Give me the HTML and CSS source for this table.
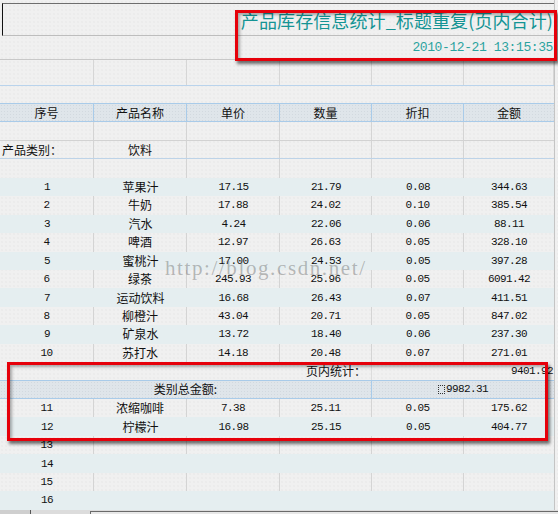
FILE: index.html
```html
<!DOCTYPE html>
<html>
<head>
<meta charset="utf-8">
<link rel="stylesheet" href="styles.css">
</head>
<body>
<div class="sheet">
  <div class="row title"><span class="title-text">产品库存信息统计_标题重复(页内合计)</span></div>
  <div class="row date"><span class="date-text">2010-12-21 13:15:35</span></div>
  <div class="row grid blank3"><div class="c"></div><div class="c"></div><div class="c"></div><div class="c"></div><div class="c"></div><div class="c"></div></div>
  <div class="row gap"></div>
  <div class="row grid head"><div class="c">序号</div><div class="c">产品名称</div><div class="c">单价</div><div class="c">数量</div><div class="c">折扣</div><div class="c">金额</div></div>
  <div class="row grid lined after-head"><div class="c"></div><div class="c"></div><div class="c"></div><div class="c"></div><div class="c"></div><div class="c"></div></div>
  <div class="row grid lined cat"><div class="c left">产品类别：</div><div class="c">饮料</div><div class="c"></div><div class="c"></div><div class="c"></div><div class="c"></div></div>
  <div class="row grid lined"><div class="c"></div><div class="c"></div><div class="c"></div><div class="c"></div><div class="c"></div><div class="c"></div></div>

  <div class="row grid tint"><div class="c n">1</div><div class="c">苹果汁</div><div class="c n">17.15</div><div class="c n">21.79</div><div class="c n">0.08</div><div class="c n">344.63</div></div>
  <div class="row grid lined"><div class="c n">2</div><div class="c">牛奶</div><div class="c n">17.88</div><div class="c n">24.02</div><div class="c n">0.10</div><div class="c n">385.54</div></div>
  <div class="row grid tint"><div class="c n">3</div><div class="c">汽水</div><div class="c n">4.24</div><div class="c n">22.06</div><div class="c n">0.06</div><div class="c n">88.11</div></div>
  <div class="row grid lined"><div class="c n">4</div><div class="c">啤酒</div><div class="c n">12.97</div><div class="c n">26.63</div><div class="c n">0.05</div><div class="c n">328.10</div></div>
  <div class="row grid tint"><div class="c n">5</div><div class="c">蜜桃汁</div><div class="c n">17.00</div><div class="c n">24.53</div><div class="c n">0.05</div><div class="c n">397.28</div></div>
  <div class="row grid lined"><div class="c n">6</div><div class="c">绿茶</div><div class="c n">245.93</div><div class="c n">25.96</div><div class="c n">0.05</div><div class="c n">6091.42</div></div>
  <div class="row grid tint"><div class="c n">7</div><div class="c">运动饮料</div><div class="c n">16.68</div><div class="c n">26.43</div><div class="c n">0.07</div><div class="c n">411.51</div></div>
  <div class="row grid lined"><div class="c n">8</div><div class="c">柳橙汁</div><div class="c n">43.04</div><div class="c n">20.71</div><div class="c n">0.05</div><div class="c n">847.02</div></div>
  <div class="row grid tint"><div class="c n">9</div><div class="c">矿泉水</div><div class="c n">13.72</div><div class="c n">18.40</div><div class="c n">0.06</div><div class="c n">237.30</div></div>
  <div class="row grid lined"><div class="c n">10</div><div class="c">苏打水</div><div class="c n">14.18</div><div class="c n">20.48</div><div class="c n">0.07</div><div class="c n">271.01</div></div>

  <div class="row grid pagesum"><div class="c"></div><div class="c"></div><div class="c"></div><div class="c right">页内统计：</div><div class="c"></div><div class="c right n">9401.92</div></div>
  <div class="row grid catsum"><div class="c span4">类别总金额:</div><div class="c span2 n"><span class="tofu"></span>9982.31</div></div>

  <div class="row grid lined"><div class="c n">11</div><div class="c">浓缩咖啡</div><div class="c n">7.38</div><div class="c n">25.11</div><div class="c n">0.05</div><div class="c n">175.62</div></div>
  <div class="row grid tint"><div class="c n">12</div><div class="c">柠檬汁</div><div class="c n">16.98</div><div class="c n">25.15</div><div class="c n">0.05</div><div class="c n">404.77</div></div>
  <div class="row grid lined"><div class="c n">13</div><div class="c"></div><div class="c"></div><div class="c"></div><div class="c"></div><div class="c"></div></div>
  <div class="row grid tint"><div class="c n">14</div><div class="c"></div><div class="c"></div><div class="c"></div><div class="c"></div><div class="c"></div></div>
  <div class="row grid lined"><div class="c n">15</div><div class="c"></div><div class="c"></div><div class="c"></div><div class="c"></div><div class="c"></div></div>
  <div class="row grid tint"><div class="c n">16</div><div class="c"></div><div class="c"></div><div class="c"></div><div class="c"></div><div class="c"></div></div>

  <div class="tabs"><div class="tab-a"></div><div class="tab-b"></div></div>
</div>

<div class="watermark">http://blog.csdn.net/</div>
<div class="callout callout-top"></div>
<div class="callout callout-mid"></div>
</body>
</html>
```

FILE: styles.css
```css
html, body {
  margin: 0;
  padding: 0;
}
body {
  width: 558px;
  height: 514px;
  overflow: hidden;
  position: relative;
  background-color: #f0f0f0;
  background-image: radial-gradient(#e5e5e5 0.6px, transparent 0.8px);
  background-size: 4px 4px;
  font-family: "Noto Sans CJK SC", sans-serif;
  font-size: 12px;
  color: #111;
}
.sheet {
  width: 554px;
  padding-top: 3px;
  border-right: 1px solid #c4c4c4;
}
.row {
  box-sizing: border-box;
}
.title {
  height: 33px;
  margin-left: 2px;
  border-top: 1px solid #6e6e6e;
  border-left: 1px solid #111;
  border-bottom: 1px solid #bdbdbd;
  display: flex;
  align-items: center;
  justify-content: flex-end;
  padding-right: 1px;
}
.title-text {
  font-family: "Noto Sans CJK SC", sans-serif;
  font-size: 18px;
  font-weight: 400;
  color: #149494;
  line-height: 20px;
  letter-spacing: 0.1px;
}
.date {
  height: 24px;
  border-bottom: 1px solid #c8c8c8;
  display: flex;
  align-items: center;
  justify-content: flex-end;
  padding-right: 1px;
}
.date-text {
  font-family: "Liberation Mono", monospace;
  font-size: 13px;
  letter-spacing: -0.4px;
  color: #2ba39f;
}
.grid {
  display: grid;
  grid-template-columns: 94px 93px 93px 92px 92px 90px;
}
.c {
  box-sizing: border-box;
  display: flex;
  align-items: center;
  justify-content: center;
  white-space: nowrap;
  overflow: hidden;
  line-height: 16px;
}
.n {
  font-family: "Liberation Mono", monospace;
  font-size: 11px;
  letter-spacing: -0.6px;
}
.left {
  justify-content: flex-start;
  padding-left: 2px;
}
.right {
  justify-content: flex-end;
  padding-right: 5px;
}
.blank3 {
  height: 26px;
  border-bottom: 1px solid #b9d3ec;
}
.blank3 .c {
  border-right: 1px solid #d6d6d6;
}
.gap {
  height: 18px;
  border-bottom: 1px solid #a9cbe9;
}
.head, .lined, .tint, .pagesum, .catsum {
  height: 18.45px;
}
.head {
  background-color: #dfe5ea;
  background-image: radial-gradient(#d2d9df 0.7px, transparent 0.9px);
  background-size: 3px 3px;
  border-bottom: 1px solid #a9cbe9;
}
.head .c {
  border-right: 1px solid #a9cbe9;
}
.lined .c {
  border-right: 1px solid #d4d4d4;
}
.lined .c:last-child, .tint .c:last-child, .head .c:last-child {
  border-right: none;
}
.after-head {
  border-bottom: 1px solid #d2d2d2;
}
.cat {
  border-bottom: 1px solid #bdd3e8;
}
.tint {
  background-color: #e5eef0;
}
.pagesum {
  border-bottom: 1px solid #a9cbe9;
}
.pagesum .c:nth-child(4) {
  border-right: 1px solid #dcdcdc;
}
.pagesum .c:last-child {
  padding-right: 1px;
}
.catsum {
  background-color: #dfe5ea;
  background-image: radial-gradient(#d2d9df 0.7px, transparent 0.9px);
  background-size: 3px 3px;
  border-bottom: 1px solid #a9cbe9;
}
.span4 {
  grid-column: span 4;
  border-right: 1px solid #a9cbe9;
}
.span2 {
  grid-column: span 2;
}
.tofu {
  display: inline-block;
  width: 7px;
  height: 9px;
  border: 1px dotted #333;
  box-sizing: border-box;
  margin-right: 1px;
}
.tabs {
  height: 5px;
  position: relative;
  background: #dcdcdc;
  width: 558px;
}
.tab-a {
  position: absolute;
  left: 0;
  top: 0;
  width: 30px;
  height: 5px;
  background: #cfcfcf;
  border-right: 1px solid #555;
}
.tab-b {
  position: absolute;
  left: 90px;
  top: 1px;
  width: 470px;
  height: 4px;
  border-top: 1px solid #6a6a6a;
  border-left: 1px solid #6a6a6a;
  background: #e8e8e8;
}
.watermark {
  position: absolute;
  left: 165px;
  top: 256px;
  font-family: "Liberation Serif", serif;
  font-size: 21px;
  letter-spacing: 1.6px;
  color: rgba(110, 110, 110, 0.45);
  white-space: nowrap;
  pointer-events: none;
}
.callout {
  position: absolute;
  box-sizing: border-box;
  border: 3px solid #e6000a;
  box-shadow: 2px 3px 3px rgba(0, 0, 0, 0.55), inset 2px 2px 3px rgba(0, 0, 0, 0.3);
}
.callout-top {
  left: 235px;
  top: 10px;
  width: 322px;
  height: 51px;
}
.callout-mid {
  left: 7px;
  top: 362px;
  width: 541px;
  height: 79px;
}
```
